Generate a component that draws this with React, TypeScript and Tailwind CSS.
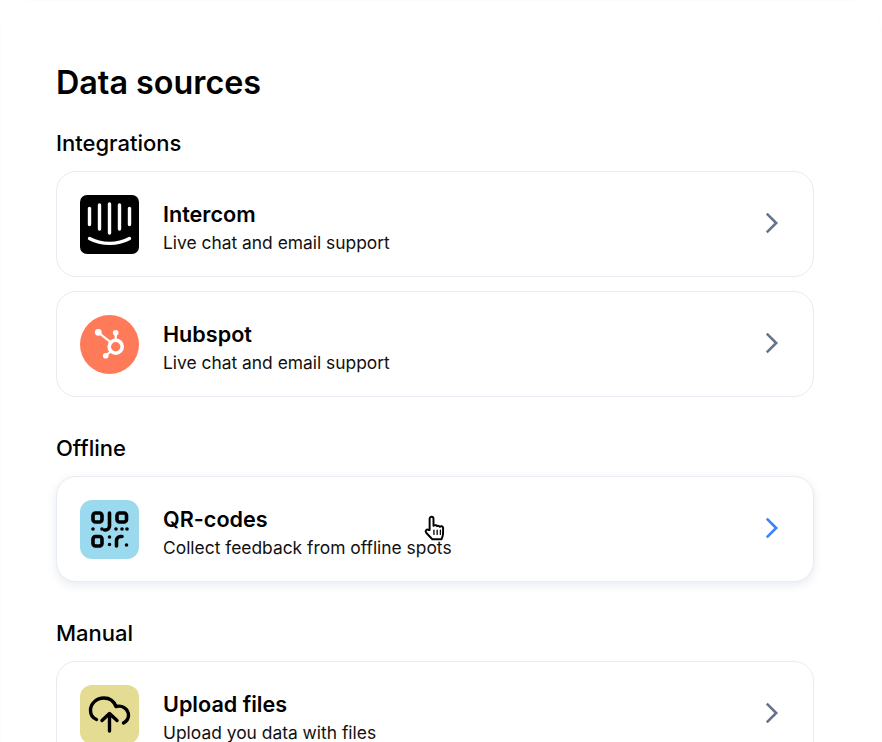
const ChevronIcon = ({ color }: { color: string }) => (
  <svg width="30" height="30" viewBox="0 0 30 30" fill="none" stroke={color} strokeWidth="2.6" strokeLinejoin="miter" className="mb-[2px]">
    <path d="M9.800 5.600 19.200 15 9.800 24.400" />
  </svg>
);

const IntercomLogo = () => (
  <div className="w-[59px] h-[59px] rounded-[7px] bg-black shrink-0">
    <svg width="59" height="59" viewBox="0 0 59 59" fill="none" stroke="white" strokeWidth="3.400" strokeLinecap="round">
      <path d="M9.500 13.500v16M19.500 10v24M29.500 9v29M39.500 10v24M49.500 13.500v16" />
      <path d="M9.500 43.500c12 6.500 28 6.500 40 0" />
    </svg>
  </div>
);

const HubspotLogo = () => (
  <div className="w-[59px] h-[59px] rounded-full bg-[#ff7a59] shrink-0">
    <svg width="59" height="59" viewBox="0 0 59 59" fill="none" stroke="white">
      <circle cx="35.700" cy="31.700" r="6.500" strokeWidth="3.600" />
      <path d="M35.700 25V17M18.300 17.500 31 27.500M30.500 36.500 25.700 41" strokeWidth="2.200" />
      <circle cx="35.700" cy="17.700" r="2.800" fill="white" stroke="none" />
      <circle cx="18.300" cy="17.300" r="3.400" fill="white" stroke="none" />
      <circle cx="25.700" cy="40.700" r="2.800" fill="white" stroke="none" />
    </svg>
  </div>
);

const QrLogo = () => (
  <div className="w-[59px] h-[59px] rounded-[12px] bg-[#9bdaee] shrink-0">
    <svg width="59" height="59" viewBox="0 0 59 59" fill="none" stroke="black" strokeWidth="3.600" strokeLinecap="round" strokeLinejoin="round">
      <rect x="13" y="13" width="9" height="9" rx="2.500" />
      <rect x="37" y="13" width="9.500" height="9" rx="2.500" />
      <rect x="13" y="36.500" width="9" height="9.500" rx="2.500" />
      <path d="M29.500 13v13a4 4 0 0 1-4 4h-1" />
      <path d="M36.500 46v-5.500a4 4 0 0 1 4-4h1.500" />
      <path d="M13 29h.01M22 29h.01M36 29h.01M42 29h.01M47 29h.01M29.500 37h.01M29.500 44.500h.01M46.500 45h.01" />
    </svg>
  </div>
);

const UploadLogo = () => (
  <div className="w-[59px] h-[59px] rounded-[12px] bg-[#e3dc92] shrink-0">
    <svg width="59" height="59" viewBox="0 0 59 59" fill="none" stroke="black" strokeWidth="3.400" strokeLinecap="round" strokeLinejoin="round">
      <path d="M16.500 34.500c-3.500-1.500-6-4.500-6-9 0-7 6-12.500 13.500-12.500 6 0 10 3.500 12 8.500 6-1.500 12.500 2 12.500 9 0 3-1.500 5.500-5 7.500" />
      <path d="M29.500 46V29M22 35.500l7.500-7 7.500 7" />
    </svg>
  </div>
);

const HandCursor = () => (
  <svg width="24" height="28" viewBox="0 0 22 26" className="absolute left-[366px] top-[38px]">
    <path
      d="M6 14V3.500a1.800 1.800 0 0 1 3.600 0V10l1-.4a1.700 1.700 0 0 1 2.300.8 1.700 1.700 0 0 1 2.600.6 1.700 1.700 0 0 1 3 1V17c0 2.500-.6 3.800-1.500 5.500H8.500L2.800 16.500c-1.400-1.800.6-3.800 2.200-2.500z"
      fill="white"
      stroke="black"
      strokeWidth="1.800"
      strokeLinejoin="round"
    />
    <path d="M10 14v4M13 14v4M16 14v4" stroke="black" strokeWidth="1.200" strokeLinecap="round" />
  </svg>
);

const SourceCard = ({
  logo,
  title,
  text,
  active,
  children,
}: {
  logo: React.ReactNode;
  title: string;
  text: string;
  active?: boolean;
  children?: React.ReactNode;
}) => (
  <div
    className={`relative h-[106px] shrink-0 flex items-center pl-[23px] pr-[26px] bg-white border border-[#e8ebf1] rounded-[20px] ${
      active ? "shadow-[0_3px_10px_rgba(60,80,130,0.12)]" : ""
    }`}
  >
    {logo}
    <div className="ml-6 flex-1 pt-[6px]">
      <p className="text-[21.600px] leading-[30px] font-semibold text-black">{title}</p>
      <p className="mt-[2px] text-[17.400px] leading-[24px] text-[#111]">{text}</p>
    </div>
    <ChevronIcon color={active ? "#3b82f6" : "#64748b"} />
    {children}
  </div>
);

export default function App() {
  return (
    <div className="h-[742px] overflow-hidden bg-white font-['Inter',sans-serif]">
      <div className="h-[800px] border-t border-x border-[#fcfcfc] rounded-t-[32px] pl-[55px] pr-[67px] pt-[60px]">
        <h1 className="text-[32.300px] leading-[44px] font-semibold text-black">Data sources</h1>

        <h2 className="mt-[23px] text-[22px] leading-[30px] font-medium text-black">Integrations</h2>
        <div className="mt-[13px] flex flex-col gap-[14px]">
          <SourceCard logo={<IntercomLogo />} title="Intercom" text="Live chat and email support" />
          <SourceCard logo={<HubspotLogo />} title="Hubspot" text="Live chat and email support" />
        </div>

        <h2 className="mt-[36px] text-[22px] leading-[30px] font-medium text-black">Offline</h2>
        <div className="mt-[13px]">
          <SourceCard logo={<QrLogo />} title="QR-codes" text="Collect feedback from offline spots" active>
            <HandCursor />
          </SourceCard>
        </div>

        <h2 className="mt-[36px] text-[22px] leading-[30px] font-medium text-black">Manual</h2>
        <div className="mt-[13px]">
          <SourceCard logo={<UploadLogo />} title="Upload files" text="Upload you data with files" />
        </div>
      </div>
    </div>
  );
}
